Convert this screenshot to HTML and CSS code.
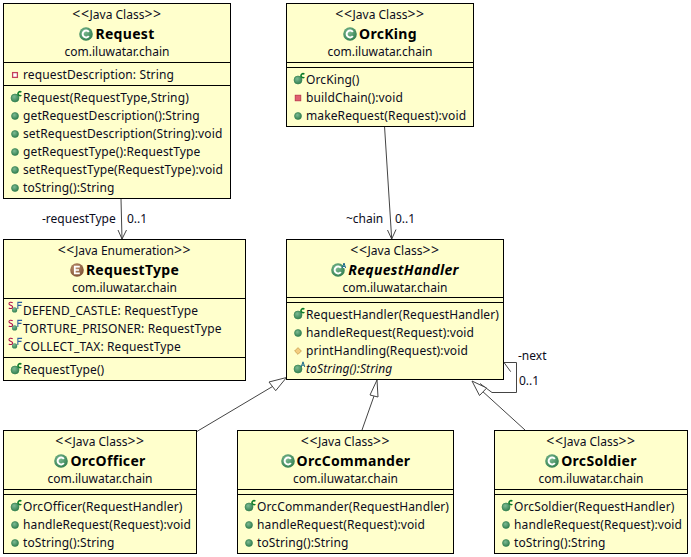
FILE: index.html
```html
<!DOCTYPE html>
<html lang="en">
<head>
<meta charset="utf-8">
<title>Chain of responsibility class diagram</title>
<link rel="stylesheet" href="styles.css">
</head>
<body>
<svg class="defs" width="0" height="0" aria-hidden="true">
  <defs>
    <radialGradient id="g-green" cx="40%" cy="35%" r="70%"><stop offset="0" stop-color="#7dba92"/><stop offset="1" stop-color="#2f7d4e"/></radialGradient>
    <radialGradient id="g-brown" cx="40%" cy="35%" r="70%"><stop offset="0" stop-color="#c09474"/><stop offset="1" stop-color="#7c4e2e"/></radialGradient>
    <symbol id="i-class" viewBox="0 0 14 14">
      <circle cx="7" cy="7" r="6.800" fill="url(#g-green)"/>
      <path d="M9.800 5 A3.400 3.400 0 1 0 9.800 9" fill="none" stroke="#fff" stroke-width="2"/>
    </symbol>
    <symbol id="i-enum" viewBox="0 0 14 14">
      <circle cx="7" cy="7" r="6.800" fill="url(#g-brown)"/>
      <path d="M9.800 3.600H4.800V10.400H9.800M4.800 7H9" fill="none" stroke="#fff" stroke-width="1.700"/>
    </symbol>
    <symbol id="i-pub" viewBox="0 0 8 8">
      <circle cx="4" cy="4" r="3.500" fill="url(#g-green)" stroke="#2f7d4e" stroke-width=".6"/>
    </symbol>
    <symbol id="i-ctor" viewBox="0 0 14 14">
      <circle cx="5" cy="8" r="4" fill="url(#g-green)" stroke="#2f7d4e" stroke-width=".6"/>
      <path d="M11.400 2.200A2 2 0 1 0 11.400 5.200" fill="none" stroke="#0a7a28" stroke-width="1.500"/>
    </symbol>
    <symbol id="i-abs" viewBox="0 0 14 14">
      <circle cx="5" cy="8" r="4" fill="url(#g-green)" stroke="#2f7d4e" stroke-width=".6"/>
      <path d="M8.200 6 10 .8 11.800 6M9 4.200H11" fill="none" stroke="#1a6a8a" stroke-width="1"/>
    </symbol>
    <symbol id="i-prot" viewBox="0 0 10 10">
      <path d="M5 .8 9.200 5 5 9.200 .8 5Z" fill="#f4cd80" stroke="#c89a48"/>
    </symbol>
    <symbol id="i-privf" viewBox="0 0 10 10">
      <rect x="2" y="2" width="6" height="6" fill="#fff" stroke="#c4405a" stroke-width="1.600"/>
    </symbol>
    <symbol id="i-privm" viewBox="0 0 10 10">
      <rect x="1.500" y="1.500" width="7" height="7" fill="#e06070" stroke="#b83048"/>
    </symbol>
    <symbol id="i-sf" viewBox="0 0 16 14">
      <circle cx="7" cy="9" r="2.800" fill="url(#g-green)"/>
      <path d="M5 1.400C3.400.2 1 .8 1 2.400 1 4.400 5 3.800 5 6 5 7.600 2.600 8.200 .8 7" fill="none" stroke="#b0104a" stroke-width="1.100"/>
      <path d="M10.500 8V1H15M10.500 4.200H14.400" fill="none" stroke="#2a60a0" stroke-width="1.100"/>
    </symbol>
    <symbol id="i-absclass" viewBox="0 0 17 15">
      <circle cx="7" cy="8" r="6.800" fill="url(#g-green)"/>
      <path d="M9.800 6A3.400 3.400 0 1 0 9.800 10" fill="none" stroke="#fff" stroke-width="2"/>
      <path d="M11.400 6 13 1 14.600 6M12 4.400H14" fill="#fff" stroke="#1a6a8a" stroke-width="1"/>
    </symbol>
  </defs>
</svg>

<main class="canvas">
  <svg class="wires" width="691" height="557" viewBox="0 0 691 557" aria-hidden="true">
    <path class="wire" d="M121 199 122 239M118 230 122 239 126.500 230"/>
    <path class="wire" d="M384.500 126 391.700 239M387.500 230 391.700 239 396 229.500"/>
    <path class="wire" d="M504 362.500H516.500V392.500H492L480 383.500M504 362.500 510.700 371.700"/>
    <path class="hollow" d="M472 381 479.500 395.500 486.700 388Z"/>
    <path class="wire" d="M525 430 483 391.800"/>
    <path class="hollow" d="M377 380 370 395 378 397Z"/>
    <path class="wire" d="M362 430 374 396"/>
    <path class="hollow" d="M286.500 377.500 269 382 275.700 390.700Z"/>
    <path class="wire" d="M196 432 272.500 386.500"/>
  </svg>

  <span class="wire-label label-request-type">-requestType</span>
  <span class="wire-label label-request-mult">0..1</span>
  <span class="wire-label label-chain">~chain</span>
  <span class="wire-label label-chain-mult">0..1</span>
  <span class="wire-label label-next">-next</span>
  <span class="wire-label label-next-mult">0..1</span>

  <article class="node node-request">
    <header class="head">
      <div><span class="angle">&lt;&lt;</span>Java Class<span class="angle">&gt;&gt;</span></div>
      <div class="title"><svg class="big"><use href="#i-class"/></svg>Request</div>
      <div>com.iluwatar.chain</div>
    </header>
    <section class="comp">
      <div class="row"><svg class="ic"><use href="#i-privf"/></svg>requestDescription: String</div>
    </section>
    <section class="comp">
      <div class="row"><svg class="ic-lg"><use href="#i-ctor"/></svg>Request(RequestType,String)</div>
      <div class="row"><svg class="ic"><use href="#i-pub"/></svg>getRequestDescription():String</div>
      <div class="row"><svg class="ic"><use href="#i-pub"/></svg>setRequestDescription(String):void</div>
      <div class="row"><svg class="ic"><use href="#i-pub"/></svg>getRequestType():RequestType</div>
      <div class="row"><svg class="ic"><use href="#i-pub"/></svg>setRequestType(RequestType):void</div>
      <div class="row"><svg class="ic"><use href="#i-pub"/></svg>toString():String</div>
    </section>
  </article>

  <article class="node node-type">
    <header class="head">
      <div><span class="angle">&lt;&lt;</span>Java Enumeration<span class="angle">&gt;&gt;</span></div>
      <div class="title"><svg class="big"><use href="#i-enum"/></svg>RequestType</div>
      <div>com.iluwatar.chain</div>
    </header>
    <section class="comp">
      <div class="row"><svg class="ic-sf"><use href="#i-sf"/></svg>DEFEND_CASTLE: RequestType</div>
      <div class="row"><svg class="ic-sf"><use href="#i-sf"/></svg>TORTURE_PRISONER: RequestType</div>
      <div class="row"><svg class="ic-sf"><use href="#i-sf"/></svg>COLLECT_TAX: RequestType</div>
    </section>
    <section class="comp">
      <div class="row"><svg class="ic-lg"><use href="#i-ctor"/></svg>RequestType()</div>
    </section>
  </article>

  <article class="node node-king">
    <header class="head">
      <div><span class="angle">&lt;&lt;</span>Java Class<span class="angle">&gt;&gt;</span></div>
      <div class="title"><svg class="big"><use href="#i-class"/></svg>OrcKing</div>
      <div>com.iluwatar.chain</div>
    </header>
    <section class="comp empty"></section>
    <section class="comp">
      <div class="row"><svg class="ic-lg"><use href="#i-ctor"/></svg>OrcKing()</div>
      <div class="row"><svg class="ic"><use href="#i-privm"/></svg>buildChain():void</div>
      <div class="row"><svg class="ic"><use href="#i-pub"/></svg>makeRequest(Request):void</div>
    </section>
  </article>

  <article class="node node-handler">
    <header class="head head-short">
      <div><span class="angle">&lt;&lt;</span>Java Class<span class="angle">&gt;&gt;</span></div>
      <div class="title title-abstract"><svg class="big-abs"><use href="#i-absclass"/></svg>RequestHandler</div>
      <div>com.iluwatar.chain</div>
    </header>
    <section class="comp empty"></section>
    <section class="comp">
      <div class="row"><svg class="ic-lg"><use href="#i-ctor"/></svg>RequestHandler(RequestHandler)</div>
      <div class="row"><svg class="ic"><use href="#i-pub"/></svg>handleRequest(Request):void</div>
      <div class="row"><svg class="ic"><use href="#i-prot"/></svg>printHandling(Request):void</div>
      <div class="row row-abstract"><svg class="ic-lg"><use href="#i-abs"/></svg>toString():String</div>
    </section>
  </article>

  <article class="node node-officer">
    <header class="head">
      <div><span class="angle">&lt;&lt;</span>Java Class<span class="angle">&gt;&gt;</span></div>
      <div class="title"><svg class="big"><use href="#i-class"/></svg>OrcOfficer</div>
      <div>com.iluwatar.chain</div>
    </header>
    <section class="comp empty"></section>
    <section class="comp">
      <div class="row"><svg class="ic-lg"><use href="#i-ctor"/></svg>OrcOfficer(RequestHandler)</div>
      <div class="row"><svg class="ic"><use href="#i-pub"/></svg>handleRequest(Request):void</div>
      <div class="row"><svg class="ic"><use href="#i-pub"/></svg>toString():String</div>
    </section>
  </article>

  <article class="node node-commander">
    <header class="head">
      <div><span class="angle">&lt;&lt;</span>Java Class<span class="angle">&gt;&gt;</span></div>
      <div class="title"><svg class="big"><use href="#i-class"/></svg>OrcCommander</div>
      <div>com.iluwatar.chain</div>
    </header>
    <section class="comp empty"></section>
    <section class="comp">
      <div class="row"><svg class="ic-lg"><use href="#i-ctor"/></svg>OrcCommander(RequestHandler)</div>
      <div class="row"><svg class="ic"><use href="#i-pub"/></svg>handleRequest(Request):void</div>
      <div class="row"><svg class="ic"><use href="#i-pub"/></svg>toString():String</div>
    </section>
  </article>

  <article class="node node-soldier">
    <header class="head">
      <div><span class="angle">&lt;&lt;</span>Java Class<span class="angle">&gt;&gt;</span></div>
      <div class="title"><svg class="big"><use href="#i-class"/></svg>OrcSoldier</div>
      <div>com.iluwatar.chain</div>
    </header>
    <section class="comp empty"></section>
    <section class="comp">
      <div class="row"><svg class="ic-lg"><use href="#i-ctor"/></svg>OrcSoldier(RequestHandler)</div>
      <div class="row"><svg class="ic"><use href="#i-pub"/></svg>handleRequest(Request):void</div>
      <div class="row"><svg class="ic"><use href="#i-pub"/></svg>toString():String</div>
    </section>
  </article>
</main>
</body>
</html>
```
FILE: styles.css
```css
* { box-sizing: border-box; }
html, body { margin: 0; padding: 0; background: #fff; }
body {
  font-family: "Noto Sans", "Liberation Sans", sans-serif;
  font-size: 12px;
  line-height: 18px;
  color: #0c0c1c;
}
.defs { position: absolute; }
.canvas { position: relative; width: 691px; height: 557px; overflow: hidden; }
.wires { position: absolute; left: 0; top: 0; }
.wire { fill: none; stroke: #444; stroke-width: 1; }
.hollow { fill: #fff; stroke: #444; stroke-width: 1; }

.wire-label { position: absolute; white-space: nowrap; }
.label-request-type { left: 42px; top: 210px; }
.label-request-mult { left: 127px; top: 210px; }
.label-chain { left: 346px; top: 210px; }
.label-chain-mult { left: 395px; top: 210px; }
.label-next { left: 518px; top: 347px; }
.label-next-mult { left: 519px; top: 372px; }

.node {
  position: absolute;
  display: flex;
  flex-direction: column;
  background: #ffffcc;
  border: 1px solid #000;
}
.node-request { left: 3px; top: 3px; width: 228px; height: 196px; }
.node-type { left: 3px; top: 239px; width: 243px; height: 142px; }
.node-king { left: 286px; top: 3px; width: 188px; height: 124px; }
.node-handler { left: 286px; top: 239px; width: 218px; height: 141px; }
.node-officer { left: 3px; top: 430px; width: 194px; height: 124px; }
.node-commander { left: 237px; top: 430px; width: 217px; height: 124px; }
.node-soldier { left: 494px; top: 430px; width: 194px; height: 124px; }

.head {
  height: 58px;
  padding-top: 1px;
  text-align: center;
  white-space: nowrap;
}
.head-short { height: 57px; }
.head > div { height: 19px; }
.angle { font-size: 14px; line-height: 18px; letter-spacing: .6px; }
.title {
  display: flex;
  justify-content: center;
  align-items: center;
  font-size: 14px;
  font-weight: 700;
  letter-spacing: .3px;
  color: #000;
}
.title-abstract { font-style: italic; }
.big { width: 14px; height: 14px; margin-right: 2px; flex: none; }
.big-abs { width: 17px; height: 15px; margin-right: 0; flex: none; }

.comp {
  border-top: 1px solid #000;
  padding: 3px 0 1px 6px;
}
.comp.empty { height: 5px; padding: 0; }
.row {
  display: flex;
  align-items: center;
  height: 18px;
  white-space: nowrap;
  letter-spacing: .12px;
}
.row-abstract { font-style: italic; }
.ic { width: 10px; height: 10px; margin-right: 3px; flex: none; padding: 1px; }
.ic-lg { width: 14px; height: 14px; margin: -2px -1px 0 0; flex: none; }
.ic-sf { width: 15px; height: 14px; margin: -6px 0 0 -2px; flex: none; }
```
